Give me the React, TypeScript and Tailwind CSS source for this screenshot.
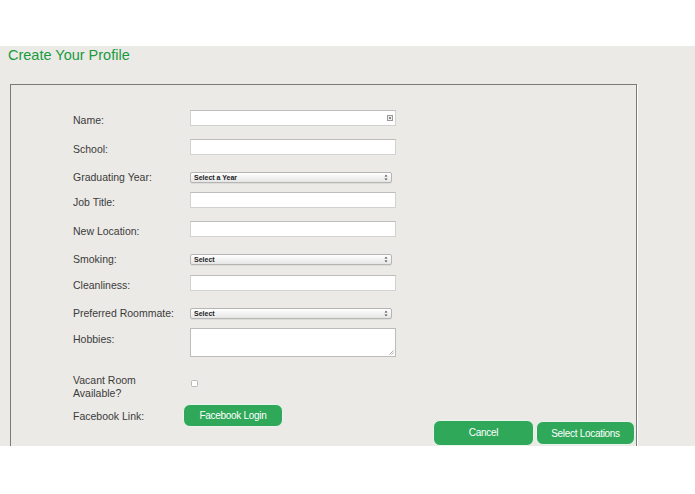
import React from 'react';

const labelCls = 'w-[117px] shrink-0 text-[10.5px] leading-[13px] text-[#3b3b3b]';

const TextInput = ({ icon = false }: { icon?: boolean }) => (
  <div className="relative h-[16px] w-[206px] border border-[#d2d2d0] border-t-[#bdbdbb] bg-white">
    {icon && (
      <span className="absolute right-[2px] top-[4px] flex h-[6px] w-[6px] items-center justify-center border border-[#9a9a9a] bg-[#eee]">
        <span className="h-[2px] w-[2px] bg-[#888]" />
      </span>
    )}
  </div>
);

const SelectBox = ({ text }: { text: string }) => (
  <div className="flex h-[11px] w-[202px] items-center justify-between rounded-[2px] border border-[#b5b5b3] bg-gradient-to-b from-white to-[#e6e6e6] pl-[3px] pr-[3px] shadow-[0_1px_0_rgba(0,0,0,0.06)]">
    <span className="text-[7px] font-bold leading-none text-[#222]">{text}</span>
    <svg width="4" height="7" viewBox="0 0 4 7">
      <path d="M0.5 2.5 L2 0.8 L3.5 2.5 Z M0.5 4.5 L2 6.2 L3.5 4.5 Z" fill="#444" />
    </svg>
  </div>
);

const btnCls = 'rounded-[7px] border border-[#e9f4ec] bg-[#2fa85a] text-[10px] tracking-[-0.3px] text-white';

const App = () => {
  return (
    <div className="w-[695px] bg-white font-['Liberation_Sans',Arial,sans-serif]">
      <div className="h-[46px]" />
      <div className="h-[400px] overflow-hidden bg-[#ebeae6]">
        <h1 className="pl-[8px] text-[14.5px] leading-[18px] text-[#199a3f]">Create Your Profile</h1>
        <div className="ml-[10px] mt-[20px] h-[400px] w-[627px] border border-[#7a7a76] shadow-[1px_1px_0_#fff]">
          <div className="pl-[62px] pt-[25px]">
            <div className="flex h-[16px] items-center">
              <label className={`${labelCls} pt-[4px]`}>Name:</label>
              <TextInput icon />
            </div>
            <div className="mt-[13px] flex h-[16px] items-center">
              <label className={`${labelCls} pt-[4px]`}>School:</label>
              <TextInput />
            </div>
            <div className="mt-[14px] flex h-[16px] items-center">
              <label className={`${labelCls} pt-[1px]`}>Graduating Year:</label>
              <SelectBox text="Select a Year" />
            </div>
            <div className="mt-[7px] flex h-[16px] items-center">
              <label className={`${labelCls} pt-[4px]`}>Job Title:</label>
              <TextInput />
            </div>
            <div className="mt-[13px] flex h-[16px] items-center">
              <label className={`${labelCls} pt-[4px]`}>New Location:</label>
              <TextInput />
            </div>
            <div className="mt-[14px] flex h-[16px] items-center">
              <label className={`${labelCls} pt-[1px]`}>Smoking:</label>
              <SelectBox text="Select" />
            </div>
            <div className="mt-[8px] flex h-[16px] items-center">
              <label className={`${labelCls} pt-[4px]`}>Cleanliness:</label>
              <TextInput />
            </div>
            <div className="mt-[14px] flex h-[16px] items-center">
              <label className={`${labelCls} pt-[1px]`}>Preferred Roommate:</label>
              <SelectBox text="Select" />
            </div>
            <div className="mt-[7px] flex items-start">
              <label className={`${labelCls} pt-[5px]`}>Hobbies:</label>
              <div className="relative h-[29px] w-[206px] border border-[#bcbcba] bg-white">
                <svg className="absolute bottom-[1px] right-[1px]" width="5" height="5" viewBox="0 0 5 5">
                  <path d="M4.5 0.5 L0.5 4.5 M4.5 2.5 L2.5 4.5" stroke="#999" strokeWidth="0.8" />
                </svg>
              </div>
            </div>
            <div className="mt-[16px] flex items-start">
              <label className={`${labelCls} pt-[1px]`}>
                Vacant Room
                <br />
                Available?
              </label>
              <span className="ml-[1px] mt-[7px] h-[7px] w-[7px] rounded-[1.5px] border border-[#b8b8b6] bg-white" />
            </div>
            <div className="mt-[4px] flex items-center">
              <label className="w-[110px] shrink-0 pt-[2px] text-[10.5px] leading-[13px] text-[#3b3b3b]">Facebook Link:</label>
              <button className={`h-[23px] w-[100px] pb-[1px] ${btnCls}`}>Facebook Login</button>
            </div>
          </div>
          <div className="-mt-[7px] flex items-start justify-end gap-[2px] pr-[1px]">
            <button className={`h-[26px] w-[101px] pb-[2px] ${btnCls}`}>Cancel</button>
            <button className={`mt-[1px] h-[24px] w-[99px] ${btnCls}`}>Select Locations</button>
          </div>
        </div>
      </div>
      <div className="h-[48px]" />
    </div>
  );
};

export default App;
